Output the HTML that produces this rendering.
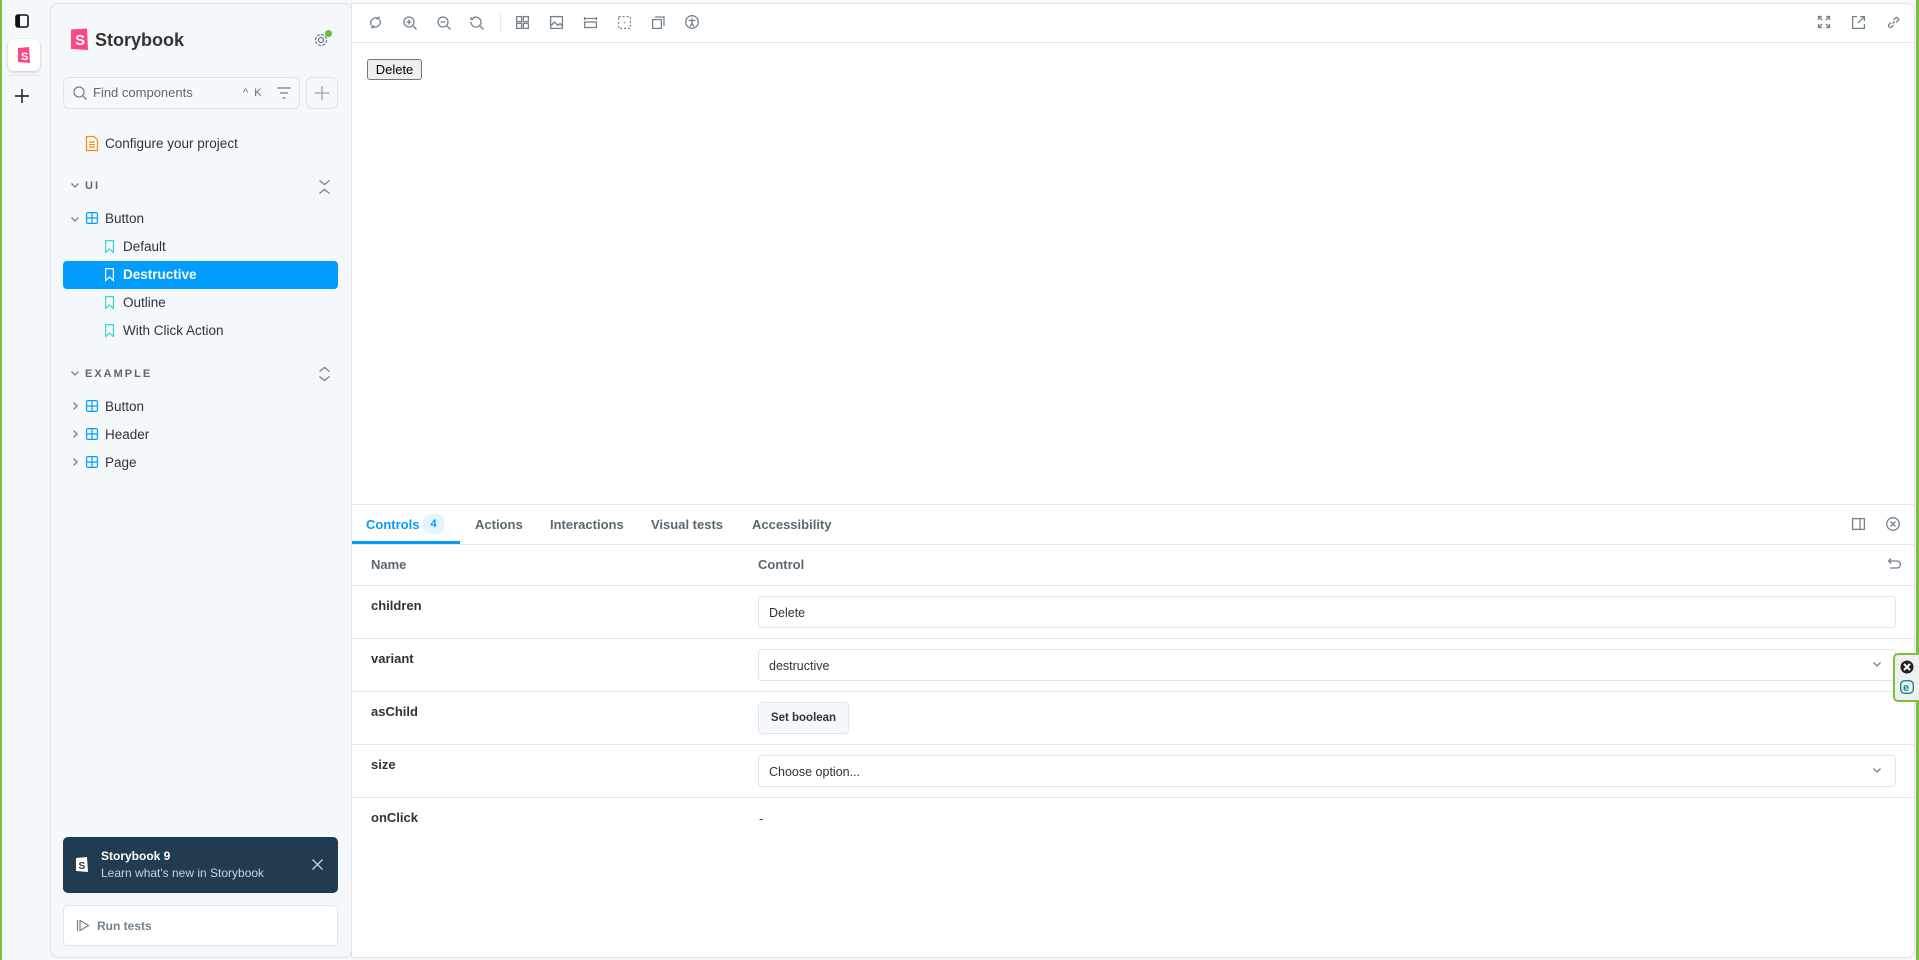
<!DOCTYPE html>
<html><head><meta charset="utf-8"><style>
*{box-sizing:border-box;margin:0;padding:0}
body{width:1919px;height:960px;overflow:hidden;background:#f6f9fc;font-family:"Liberation Sans",sans-serif;color:#2e3438;position:relative}
.abs{position:absolute}
.gl{left:0;top:0;width:2px;height:960px;background:#7cc03f}
.gr{right:0;top:0;width:3px;height:960px;background:#7cc03f}
.rail{left:2px;top:0;width:48px;height:960px;background:#f6f9fc}
.side{left:50px;top:3px;width:302px;height:955px;background:#f5f8fb;border:1px solid #dfe4e9;border-radius:8px}
.main{left:351px;top:3px;width:1564px;height:955px;background:#fff;border:1px solid #dfe4e9;border-radius:0 8px 8px 0}
.t{position:absolute;white-space:nowrap;line-height:1}
svg{position:absolute;overflow:visible}
.ic{stroke:#73828c;fill:none;stroke-width:1.3}
.bd{position:absolute;background:#e3e7eb;height:1px}
.lab{font-size:13px;font-weight:bold;color:#2e3438}
.tr{font-size:13.5px}
.tab{font-size:13px;font-weight:bold;color:#5c6870}
.inp{position:absolute;left:758px;width:1138px;height:32px;border:1px solid #dfe4e9;border-radius:4px;background:#fff;font-size:12.5px;padding:9px 0 0 10px;color:#2e3438}
</style></head><body>
<div class="abs gl"></div>
<div class="abs rail"></div>
<svg style="left:15px;top:14px" width="14" height="14"><rect x="1" y="1" width="12" height="12" rx="2" fill="none" stroke="#111" stroke-width="1.6"/><rect x="1" y="1" width="4" height="12" fill="#111"/></svg>
<div class="abs" style="left:8px;top:39px;width:32px;height:32px;background:#fff;border-radius:6px;box-shadow:0 1px 3px rgba(0,0,0,.2)"></div>
<svg style="left:18px;top:47px" width="12" height="16"><path d="M0 1 L11 0 L12 16 L0 15Z" fill="#ff4785"/><text x="3" y="13" font-size="11" font-weight="bold" fill="#fff" font-family="Liberation Sans">S</text></svg>
<div class="bd" style="left:8px;top:75px;width:32px"></div>
<svg style="left:15px;top:89px" width="14" height="14"><path d="M7 0V14M0 7H14" stroke="#111" stroke-width="1.4"/></svg>

<div class="abs side"></div>
<svg style="left:71px;top:28px" width="18" height="22"><path d="M0 1.5 L16 0.5 L17 22 L0 21Z" fill="#ff4785"/><text x="4" y="17" font-size="15" font-weight="bold" fill="#fff" font-family="Liberation Sans">S</text></svg>
<div class="t" style="left:95px;top:31px;font-size:18px;font-weight:bold;color:#333">Storybook</div>
<svg style="left:314px;top:33px" width="14" height="14"><circle cx="7" cy="7" r="2.5" class="ic"/><circle cx="7" cy="7" r="5.5" class="ic" stroke-dasharray="3 1.3"/></svg>
<div class="abs" style="left:325px;top:30px;width:7px;height:7px;border-radius:50%;background:#66bf3c"></div>
<div class="abs" style="left:63px;top:77px;width:237px;height:32px;border:1px solid #dce3ea;border-radius:6px;background:#f6f9fc"></div>
<svg style="left:73px;top:86px" width="14" height="14"><circle cx="6" cy="6" r="5" class="ic"/><path d="M10 10L13.5 13.5" class="ic"/></svg>
<div class="t" style="left:93px;top:86px;font-size:13px;color:#5c6870">Find components</div>
<div class="t" style="left:243px;top:88px;font-size:11px;color:#5c6870">^&nbsp;&nbsp;K</div>
<svg style="left:277px;top:87px" width="14" height="12"><path d="M0 1H14M3 6H11M5.5 11H8.5" class="ic"/></svg>
<div class="abs" style="left:306px;top:77px;width:32px;height:32px;border:1px solid #dce3ea;border-radius:6px"></div>
<svg style="left:315px;top:86px" width="14" height="14"><path d="M7 0V14M0 7H14" stroke="#9aa4ab" stroke-width="1.3"/></svg>

<svg style="left:86px;top:136px" width="12" height="15"><path d="M0.5 0.5H8L11.5 4V14.5H0.5Z M3 6H9 M3 8.5H9 M3 11H9" fill="none" stroke="#f88a15" stroke-width="1.2"/></svg>
<div class="t tr" style="left:105px;top:137px">Configure your project</div>

<svg style="left:71px;top:183px" width="8" height="5"><path d="M0.5 0.5L4 4L7.5 0.5" class="ic"/></svg>
<div class="t" style="left:85px;top:181px;font-size:11px;font-weight:bold;letter-spacing:2px;color:#5c6870">UI</div>
<svg style="left:319px;top:180px" width="11" height="14"><path d="M0.5 0.5L5.5 4.5L10.5 0.5M0.5 13.5L5.5 9.5L10.5 13.5" class="ic"/></svg>

<svg style="left:71px;top:217px" width="8" height="5"><path d="M0.5 0.5L4 4L7.5 0.5" class="ic"/></svg>
<svg style="left:86px;top:212px" width="12" height="12"><rect x="0.6" y="0.6" width="10.8" height="10.8" rx="1.5" fill="none" stroke="#029cfd" stroke-width="1.2"/><path d="M6 0.6V11.4M0.6 6H11.4" stroke="#029cfd" stroke-width="1.2"/></svg>
<div class="t tr" style="left:105px;top:212px">Button</div>

<svg style="left:105px;top:240px" width="9" height="13"><path d="M0.6 0.6H8.4V12.4L4.5 9L0.6 12.4Z" fill="none" stroke="#37d5d3" stroke-width="1.2"/></svg>
<div class="t tr" style="left:123px;top:240px">Default</div>
<div class="abs" style="left:63px;top:261px;width:275px;height:28px;background:#029cfd;border-radius:4px"></div>
<svg style="left:105px;top:268px" width="9" height="13"><path d="M0.6 0.6H8.4V12.4L4.5 9L0.6 12.4Z" fill="none" stroke="#fff" stroke-width="1.2"/></svg>
<div class="t tr" style="left:123px;top:268px;font-weight:bold;color:#fff">Destructive</div>
<svg style="left:105px;top:296px" width="9" height="13"><path d="M0.6 0.6H8.4V12.4L4.5 9L0.6 12.4Z" fill="none" stroke="#37d5d3" stroke-width="1.2"/></svg>
<div class="t tr" style="left:123px;top:296px">Outline</div>
<svg style="left:105px;top:324px" width="9" height="13"><path d="M0.6 0.6H8.4V12.4L4.5 9L0.6 12.4Z" fill="none" stroke="#37d5d3" stroke-width="1.2"/></svg>
<div class="t tr" style="left:123px;top:324px">With Click Action</div>

<svg style="left:71px;top:371px" width="8" height="5"><path d="M0.5 0.5L4 4L7.5 0.5" class="ic"/></svg>
<div class="t" style="left:85px;top:369px;font-size:11px;font-weight:bold;letter-spacing:2px;color:#5c6870">EXAMPLE</div>
<svg style="left:319px;top:367px" width="11" height="14"><path d="M0.5 4.5L5.5 0.5L10.5 4.5M0.5 9.5L5.5 13.5L10.5 9.5" class="ic"/></svg>

<svg style="left:73px;top:402px" width="5" height="8"><path d="M0.5 0.5L4 4L0.5 7.5" class="ic"/></svg>
<svg style="left:86px;top:400px" width="12" height="12"><rect x="0.6" y="0.6" width="10.8" height="10.8" rx="1.5" fill="none" stroke="#029cfd" stroke-width="1.2"/><path d="M6 0.6V11.4M0.6 6H11.4" stroke="#029cfd" stroke-width="1.2"/></svg>
<div class="t tr" style="left:105px;top:400px">Button</div>
<svg style="left:73px;top:430px" width="5" height="8"><path d="M0.5 0.5L4 4L0.5 7.5" class="ic"/></svg>
<svg style="left:86px;top:428px" width="12" height="12"><rect x="0.6" y="0.6" width="10.8" height="10.8" rx="1.5" fill="none" stroke="#029cfd" stroke-width="1.2"/><path d="M6 0.6V11.4M0.6 6H11.4" stroke="#029cfd" stroke-width="1.2"/></svg>
<div class="t tr" style="left:105px;top:428px">Header</div>
<svg style="left:73px;top:458px" width="5" height="8"><path d="M0.5 0.5L4 4L0.5 7.5" class="ic"/></svg>
<svg style="left:86px;top:456px" width="12" height="12"><rect x="0.6" y="0.6" width="10.8" height="10.8" rx="1.5" fill="none" stroke="#029cfd" stroke-width="1.2"/><path d="M6 0.6V11.4M0.6 6H11.4" stroke="#029cfd" stroke-width="1.2"/></svg>
<div class="t tr" style="left:105px;top:456px">Page</div>

<div class="abs" style="left:63px;top:837px;width:275px;height:56px;background:#213b50;border-radius:5px"></div>
<svg style="left:76px;top:857px" width="12" height="15"><path d="M0 1L11 0L12 15L0 14Z" fill="#fff"/><text x="2.5" y="12" font-size="10" font-weight="bold" fill="#213b50" font-family="Liberation Sans">S</text></svg>
<div class="t" style="left:101px;top:850px;font-size:12px;font-weight:bold;color:#fff">Storybook 9</div>
<div class="t" style="left:101px;top:867px;font-size:12px;color:#c9d3db">Learn what's new in Storybook</div>
<svg style="left:312px;top:859px" width="11" height="11"><path d="M0.5 0.5L10.5 10.5M10.5 0.5L0.5 10.5" stroke="#c9d3db" stroke-width="1.3"/></svg>
<div class="abs" style="left:63px;top:905px;width:275px;height:41px;background:#fff;border:1px solid #e3e7eb;border-radius:5px"></div>
<svg style="left:77px;top:920px" width="12" height="11"><path d="M0.5 0V11M3 0.5L11.5 5.5L3 10.5Z" fill="none" stroke="#73828c" stroke-width="1.2"/></svg>
<div class="t" style="left:97px;top:920px;font-size:12px;font-weight:bold;color:#73828c">Run tests</div>

<div class="abs main"></div>
<div class="bd" style="left:352px;top:42px;width:1562px"></div>
<svg style="left:369px;top:16px" width="13" height="13"><path d="M2 9A5.5 5.5 0 0 1 10 2.5M11 4A5.5 5.5 0 0 1 3 10.5M10 0.5V3H7.5M3 12.5V10H5.5" class="ic"/></svg>
<svg style="left:403px;top:16px" width="14" height="14"><circle cx="6" cy="6" r="5" class="ic"/><path d="M10 10L13.5 13.5M6 3.5V8.5M3.5 6H8.5" class="ic"/></svg>
<svg style="left:437px;top:16px" width="14" height="14"><circle cx="6" cy="6" r="5" class="ic"/><path d="M10 10L13.5 13.5M3.5 6H8.5" class="ic"/></svg>
<svg style="left:470px;top:16px" width="14" height="14"><path d="M2.5 2.5A5 5 0 1 1 1 6M1 1V3.5H3.5M10 10L13.5 13.5" class="ic"/></svg>
<div class="abs" style="left:500px;top:13px;width:1px;height:20px;background:#e3e7eb"></div>
<svg style="left:516px;top:16px" width="13" height="13"><rect x="0.6" y="0.6" width="5" height="5" class="ic"/><rect x="7.4" y="0.6" width="5" height="5" class="ic"/><rect x="0.6" y="7.4" width="5" height="5" class="ic"/><rect x="7.4" y="7.4" width="5" height="5" class="ic"/></svg>
<svg style="left:550px;top:16px" width="13" height="13"><rect x="0.6" y="0.6" width="11.8" height="11.8" class="ic"/><path d="M0.6 10L4.5 6L8 9.5L10 7.5L12.4 10" class="ic"/></svg>
<svg style="left:584px;top:17px" width="13" height="11"><path d="M0.6 0V3M12.4 0V3M0.6 1.5H12.4" class="ic"/><rect x="0.6" y="5" width="11.8" height="5.5" class="ic"/></svg>
<svg style="left:618px;top:16px" width="13" height="13"><rect x="0.6" y="0.6" width="11.8" height="11.8" class="ic" stroke-dasharray="2 2"/><circle cx="6.5" cy="6.5" r="0.8" fill="#73828c"/></svg>
<svg style="left:652px;top:16px" width="13" height="13"><rect x="0.6" y="3.6" width="8.8" height="8.8" class="ic"/><path d="M3 1H12V10" class="ic"/></svg>
<svg style="left:685px;top:15px" width="14" height="14"><circle cx="7" cy="7" r="6.3" class="ic"/><circle cx="7" cy="4" r="0.9" fill="#73828c"/><path d="M3.5 5.5H10.5M7 5.5V8.5L5 11.5M7 8.5L9 11.5" class="ic"/></svg>
<svg style="left:1818px;top:16px" width="12" height="12"><path d="M0.5 4V0.5H4M8 0.5H11.5V4M11.5 8V11.5H8M4 11.5H0.5V8M0.5 0.5L4 4M11.5 0.5L8 4M11.5 11.5L8 8M0.5 11.5L4 8" class="ic"/></svg>
<svg style="left:1852px;top:16px" width="13" height="13"><path d="M5 0.6H0.6V12.4H12.4V8M8 0.6H12.4V5M12.4 0.6L6 7" class="ic"/></svg>
<svg style="left:1887px;top:16px" width="13" height="13"><path d="M5.5 7.5L7.5 5.5M4 6.5L1.5 9A2.1 2.1 0 0 0 4 11.5L6.5 9M9 6.5L11.5 4A2.1 2.1 0 0 0 9 1.5L6.5 4" class="ic"/></svg>

<div class="abs" style="left:367px;top:59px;width:55px;height:21px;background:#efefef;border:1px solid #767676;border-radius:3px;font-size:13px;color:#000;text-align:center;line-height:19px">Delete</div>

<div class="bd" style="left:352px;top:504px;width:1562px"></div>
<div class="t tab" style="left:366px;top:518px;color:#029cfd">Controls</div>
<div class="abs" style="left:422px;top:514px;width:23px;height:20px;border-radius:10px;background:#e3f3ff;font-size:11px;font-weight:bold;color:#029cfd;display:flex;align-items:center;justify-content:center">4</div>
<div class="abs" style="left:352px;top:541px;width:108px;height:3px;background:#029cfd"></div>
<div class="t tab" style="left:475px;top:518px">Actions</div>
<div class="t tab" style="left:550px;top:518px">Interactions</div>
<div class="t tab" style="left:651px;top:518px">Visual tests</div>
<div class="t tab" style="left:752px;top:518px">Accessibility</div>
<svg style="left:1852px;top:518px" width="13" height="12"><rect x="0.6" y="0.6" width="11.8" height="10.8" class="ic"/><path d="M8 0.6V11.4" class="ic"/></svg>
<svg style="left:1886px;top:517px" width="14" height="14"><circle cx="7" cy="7" r="6.3" class="ic"/><path d="M4.5 4.5L9.5 9.5M9.5 4.5L4.5 9.5" class="ic"/></svg>
<div class="bd" style="left:352px;top:544px;width:1562px"></div>

<div class="t" style="left:371px;top:558px;font-size:13px;font-weight:bold;color:#5c6870">Name</div>
<div class="t" style="left:758px;top:558px;font-size:13px;font-weight:bold;color:#5c6870">Control</div>
<svg style="left:1888px;top:558px" width="13" height="11"><path d="M3 0.5L0.6 3L3 5.5M0.6 3H9A3.5 3.5 0 0 1 9 10H2" class="ic"/></svg>
<div class="bd" style="left:352px;top:585px;width:1562px"></div>

<div class="t lab" style="left:371px;top:599px">children</div>
<div class="inp" style="top:596px">Delete</div>
<div class="bd" style="left:352px;top:638px;width:1562px"></div>
<div class="t lab" style="left:371px;top:652px">variant</div>
<div class="inp" style="top:649px">destructive</div>
<svg style="left:1873px;top:662px" width="8" height="5"><path d="M0.5 0.5L4 4L7.5 0.5" class="ic"/></svg>
<div class="bd" style="left:352px;top:691px;width:1562px"></div>
<div class="t lab" style="left:371px;top:705px">asChild</div>
<div class="abs" style="left:758px;top:702px;width:91px;height:32px;background:#f6f9fc;border:1px solid #e3e7eb;border-radius:4px;font-size:11.5px;font-weight:bold;text-align:center;line-height:30px">Set boolean</div>
<div class="bd" style="left:352px;top:744px;width:1562px"></div>
<div class="t lab" style="left:371px;top:758px">size</div>
<div class="inp" style="top:755px">Choose option...</div>
<svg style="left:1873px;top:768px" width="8" height="5"><path d="M0.5 0.5L4 4L7.5 0.5" class="ic"/></svg>
<div class="bd" style="left:352px;top:797px;width:1562px"></div>
<div class="t lab" style="left:371px;top:811px">onClick</div>
<div class="t" style="left:759px;top:812px;font-size:13px">-</div>

<div class="abs gr"></div>
<div class="abs" style="left:1893px;top:653px;width:26px;height:49px;background:#f0f0f0;border:2px solid #7cc03f;border-right:none;border-radius:5px 0 0 5px"></div>
<svg style="left:1900px;top:660px" width="14" height="14"><circle cx="7" cy="7" r="6.5" fill="#222"/><path d="M4 4L10 10M10 4L4 10" stroke="#fff" stroke-width="2"/></svg>
<svg style="left:1900px;top:680px" width="14" height="14"><rect x="0.7" y="0.7" width="12.6" height="12.6" rx="4" fill="none" stroke="#0f8c8c" stroke-width="1.4"/><text x="3" y="11" font-size="11" font-weight="bold" fill="#0f8c8c" font-family="Liberation Sans">e</text></svg>
</body></html>
